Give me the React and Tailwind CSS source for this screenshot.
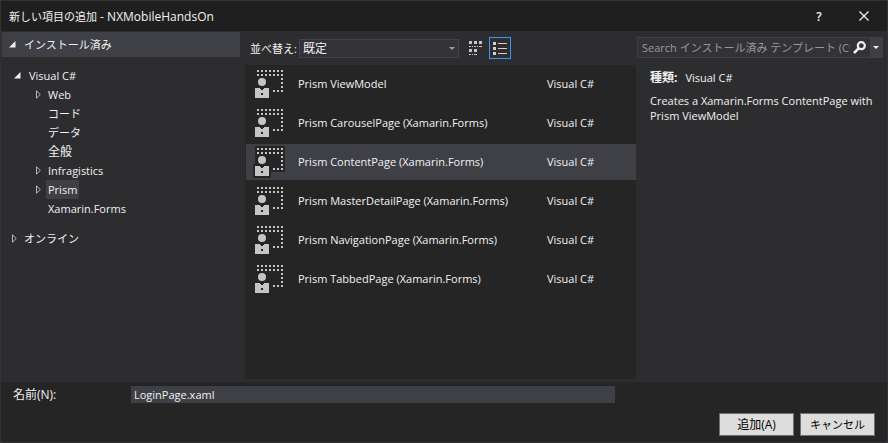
import React from "react";

const templates = [
  "Prism ViewModel",
  "Prism CarouselPage (Xamarin.Forms)",
  "Prism ContentPage (Xamarin.Forms)",
  "Prism MasterDetailPage (Xamarin.Forms)",
  "Prism NavigationPage (Xamarin.Forms)",
  "Prism TabbedPage (Xamarin.Forms)",
];

const categories = [
  { name: "Web", branch: true },
  { name: "コード" },
  { name: "データ" },
  { name: "全般", kanji: true },
  { name: "Infragistics", branch: true },
  { name: "Prism", branch: true, selected: true },
  { name: "Xamarin.Forms" },
];

function OpenArrow() {
  return (
    <svg className="h-[7px] w-[7px] shrink-0" viewBox="0 0 7 7" aria-hidden="true">
      <path d="M6.500 0V6.500H0Z" fill="#f1f1f1" />
    </svg>
  );
}

function ClosedArrow() {
  return (
    <svg className="h-[9px] w-[6px] shrink-0" viewBox="0 0 6 9" aria-hidden="true">
      <path d="M1.500 0.800V8.200L5.300 4.500Z" fill="none" stroke="#b8b8b8" />
    </svg>
  );
}

const dots = [];
for (let i = 0; i < 7; i++) {
  dots.push([4 + i * 4, 2], [4 + i * 4, 6]);
}
for (let i = 0; i < 3; i++) {
  dots.push([28, 10 + i * 4], [20 + i * 4, 22]);
}

function TemplateIcon() {
  return (
    <svg className="h-8 w-8 shrink-0" viewBox="0 0 32 32" shapeRendering="crispEdges" aria-hidden="true">
      <path d="M2 0H32V26H18V32H0V18H2Z" fill="#252526" />
      {dots.map(([x, y]) => (
        <rect key={x + "-" + y} x={x} y={y} width="2" height="2" fill="#c5c5c5" />
      ))}
      <circle cx="9" cy="14" r="4" fill="#c5c5c5" shapeRendering="auto" />
      <path d="M2 20H6L9 22L12 20H16V30H2Z" fill="#c5c5c5" />
      <rect x="8" y="25" width="2" height="2" fill="#252526" />
    </svg>
  );
}

function GridIcon() {
  return (
    <svg className="h-[14px] w-[13px]" viewBox="0 0 13 14" fill="#c5c5c5" shapeRendering="crispEdges" aria-hidden="true">
      <path d="M0 0h3v3H0zM5 0h3v3H5zM10 0h3v3h-3zM0 5h2v1H0zM3 5h1v1H3zM5 5h2v1H5zM8 5h1v1H8zM10 5h3v1h-3zM0 8h3v3H0zM5 8h3v3H5zM0 13h2v1H0zM3 13h1v1H3zM5 13h3v1H5z" />
    </svg>
  );
}

function ListIcon() {
  return (
    <svg className="h-[13px] w-[14px]" viewBox="0 0 14 13" fill="#d0d0d0" shapeRendering="crispEdges" aria-hidden="true">
      <path d="M0 0h3v3H0zM0 5h3v3H0zM0 10h3v3H0zM5 1h9v1H5zM5 6h9v1H5zM5 11h9v1H5z" />
    </svg>
  );
}

export default function App() {
  return (
    <div className="flex min-h-screen flex-col border border-[#333337] bg-[#2d2d30] font-['Open_Sans','Noto_Sans_CJK_JP',sans-serif] text-[11px] leading-[15px] text-[#f1f1f1]">
      <header className="flex h-[30px] items-center bg-[#1f1f20] pl-2 pr-[18px]">
        <h1 className="grow text-[12px]">
          <span className="text-[11px]">新しい項目の追加</span> - NXMobileHandsOn
        </h1>
        <button aria-label="ヘルプ" className="mr-[34px] w-3 text-[12px] font-semibold">?</button>
        <button aria-label="閉じる" className="flex w-[10px]">
          <svg className="h-[10px] w-[10px]" viewBox="0 0 10 10" aria-hidden="true">
            <path d="M0.500 0.500L9.500 9.500M9.500 0.500L0.500 9.500" stroke="#f1f1f1" strokeWidth="1.300" />
          </svg>
        </button>
      </header>

      <main className="flex grow">
        <nav className="flex w-[244px] shrink-0 flex-col items-start pl-px pr-[5px] pt-px">
          <button className="flex h-[25px] w-full items-center gap-2 bg-[#3f3f46] pl-[7px]">
            <OpenArrow />
            インストール済み
          </button>
          <button className="mt-[9px] flex h-[19px] items-center gap-2 pl-[12px]">
            <OpenArrow />
            Visual C#
          </button>
          <ul className="pl-[33px]">
            {categories.map((c) => (
              <li key={c.name}>
                <button className="flex h-[19px] items-center">
                  <span className="flex w-[11px]">{c.branch && <ClosedArrow />}</span>
                  <span
                    className={
                      "flex h-[19px] items-center px-[2px] " +
                      (c.selected ? "bg-[#3f3f46] " : "") +
                      (c.kanji ? "text-[12px]" : "")
                    }
                  >
                    {c.name}
                  </span>
                </button>
              </li>
            ))}
          </ul>
          <button className="mt-[11px] flex h-[19px] items-center gap-[7px] pl-[9px]">
            <ClosedArrow />
            オンライン
          </button>
        </nav>

        <section className="flex min-w-0 grow flex-col pb-[3px]">
          <div className="flex h-[34px] items-center pl-[5px]">
            <label htmlFor="sort" className="w-[49px] shrink-0 whitespace-nowrap">並べ替え:</label>
            <div className="relative w-[160px]">
              <select id="sort" className="block h-[19px] w-full appearance-none border border-[#434346] bg-[#333337] pl-[3px] text-[12px] leading-[15px] text-[#f1f1f1]">
                <option>既定</option>
              </select>
              <svg className="pointer-events-none absolute right-[4px] top-[8px] h-[3px] w-[6px]" viewBox="0 0 6 3" aria-hidden="true">
                <path d="M0 0H6L3 3Z" fill="#999999" />
              </svg>
            </div>
            <button aria-label="小さいアイコン" className="ml-[10px]"><GridIcon /></button>
            <button aria-label="中アイコン" className="ml-[7px] flex h-[22px] w-[22px] items-center justify-center border border-[#3399ff]"><ListIcon /></button>
          </div>
          <ul className="flex grow flex-col gap-[3px] bg-[#252526] pl-px pt-px">
            {templates.map((name, i) => (
              <li key={name}>
                <button className={"flex h-9 w-full items-center pl-[7px] text-left " + (i === 2 ? "bg-[#3f3f46]" : "")}>
                  <TemplateIcon />
                  <span className="grow pb-[2px] pl-[13px]">{name}</span>
                  <span className="w-[89px] pb-[2px]">Visual C#</span>
                </button>
              </li>
            ))}
          </ul>
        </section>

        <aside className="w-[251px] shrink-0 pl-px pr-1 pt-[6px]">
          <div className="flex h-[21px] items-center border border-[#3f3f46] bg-[#333337]">
            <input
              type="text"
              aria-label="テンプレートの検索"
              placeholder="Search インストール済み テンプレート (Ctrl+E)"
              className="ml-1 min-w-0 grow bg-transparent outline-none placeholder:text-[#999999]"
            />
            <button aria-label="検索" className="ml-[3px] mr-1">
              <svg className="h-[13px] w-[13px]" viewBox="0 0 13 13" fill="none" stroke="#f1f1f1" aria-hidden="true">
                <circle cx="8.300" cy="4.700" r="3.500" strokeWidth="2.200" />
                <path d="M5.600 7.400L1 12" strokeWidth="2.600" />
              </svg>
            </button>
            <button aria-label="検索オプション" className="flex h-full w-3 items-center justify-center bg-[#3f3f46]">
              <svg className="h-[3px] w-[6px]" viewBox="0 0 6 3" aria-hidden="true">
                <path d="M0 0H6L3 3Z" fill="#f1f1f1" />
              </svg>
            </button>
          </div>
          <div className="pl-[13px] pt-3">
            <p><strong className="mr-2 text-[12px] font-bold">種類:</strong>Visual C#</p>
            <p className="mt-2">Creates a Xamarin.Forms ContentPage with Prism ViewModel</p>
          </div>
        </aside>
      </main>

      <footer className="bg-[#252526] px-3 pb-[6px] pt-1">
        <div className="flex h-[17px] items-center">
          <label htmlFor="name" className="w-[118px] shrink-0 text-[12px]">名前(N):</label>
          <input id="name" type="text" defaultValue="LoginPage.xaml" className="h-[17px] min-w-0 grow bg-[#3f3f46] px-[3px] text-[#f1f1f1] outline-none" />
          <span className="w-[260px] shrink-0" />
        </div>
        <div className="mt-[10px] flex justify-end gap-[6px]">
          <button className="h-[23px] w-[75px] border border-[#707070] bg-[#dddddd] text-[12px] text-black">追加(A)</button>
          <button className="h-[23px] w-[75px] border border-[#707070] bg-[#dddddd] text-black">キャンセル</button>
        </div>
      </footer>
    </div>
  );
}
